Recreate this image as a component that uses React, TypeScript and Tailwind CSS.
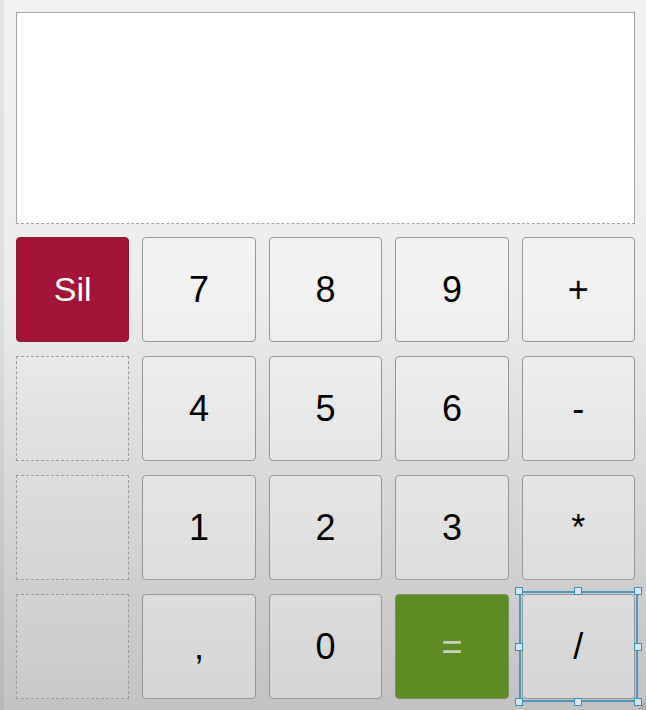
import React from "react";

type Cell =
  | { kind: "key"; label: string }
  | { kind: "sil" }
  | { kind: "eq" }
  | { kind: "empty" }
  | { kind: "sel"; label: string };

const cells: Cell[] = [
  { kind: "sil" },
  { kind: "key", label: "7" },
  { kind: "key", label: "8" },
  { kind: "key", label: "9" },
  { kind: "key", label: "+" },
  { kind: "empty" },
  { kind: "key", label: "4" },
  { kind: "key", label: "5" },
  { kind: "key", label: "6" },
  { kind: "key", label: "-" },
  { kind: "empty" },
  { kind: "key", label: "1" },
  { kind: "key", label: "2" },
  { kind: "key", label: "3" },
  { kind: "key", label: "*" },
  { kind: "empty" },
  { kind: "key", label: "," },
  { kind: "key", label: "0" },
  { kind: "eq" },
  { kind: "sel", label: "/" },
];

const font = { fontFamily: '"Liberation Sans", Arial, sans-serif' };

function Handle({ cls }: { cls: string }) {
  return (
    <div
      className={`absolute w-[8px] h-[8px] border border-[#3f8fb5] bg-[#d6e6ee] ${cls}`}
    />
  );
}

function Key({ c }: { c: Cell }) {
  if (c.kind === "empty") {
    return <div className="border border-dashed border-[#9c9c9c] bg-white/10" />;
  }
  if (c.kind === "sil") {
    return (
      <div className="rounded-[4px] border border-[#8e1a33] bg-[#a31537] flex items-center justify-center text-white text-[34px]">
        Sil
      </div>
    );
  }
  if (c.kind === "eq") {
    return (
      <div className="rounded-[4px] border border-[#7a8f62] bg-[#5f8b25] flex items-center justify-center text-[#c9cfc0] text-[36px]">
        =
      </div>
    );
  }
  const key = (
    <div className="w-full h-full rounded-[4px] border border-[#979797] bg-white/30 flex items-center justify-center text-black text-[36px]">
      {c.label}
    </div>
  );
  if (c.kind === "sel") {
    return (
      <div className="relative">
        {key}
        <div className="absolute -left-[3px] -top-[3px] -right-[3px] -bottom-[3px] border-2 border-[#4f97bd]" />
        <Handle cls="-left-[7px] -top-[7px]" />
        <Handle cls="left-1/2 -translate-x-1/2 -top-[7px]" />
        <Handle cls="-right-[7px] -top-[7px]" />
        <Handle cls="-left-[7px] top-1/2 -translate-y-1/2" />
        <Handle cls="-right-[7px] top-1/2 -translate-y-1/2" />
        <Handle cls="-left-[7px] -bottom-[7px]" />
        <Handle cls="left-1/2 -translate-x-1/2 -bottom-[7px]" />
        <Handle cls="-right-[7px] -bottom-[7px]" />
      </div>
    );
  }
  return key;
}

export default function App() {
  return (
    <div
      className="relative w-[646px] h-[710px] overflow-hidden bg-[linear-gradient(to_bottom,#f2f2f2,#ededed_40%,#c2c2c2)]"
      style={font}
    >
      <div className="absolute left-0 top-0 bottom-0 w-[4px] bg-black/5" />
      <div className="pl-[16px] pr-[11px] pt-[12px] flex flex-col">
        <div className="h-[212px] bg-white border border-[#a4a4a4] [border-bottom-style:dashed]" />
        <div className="mt-[13px] h-[462px] grid grid-cols-5 grid-rows-4 gap-x-[13px] gap-y-[14px]">
          {cells.map((c, i) => (
            <Key key={i} c={c} />
          ))}
        </div>
      </div>
      <svg
        className="absolute right-0 bottom-0"
        width="10"
        height="10"
        viewBox="0 0 10 10"
      >
        <path d="M10 2 L2 10 M10 5 L5 10 M10 8 L8 10" stroke="#888" strokeWidth="1" />
      </svg>
    </div>
  );
}
